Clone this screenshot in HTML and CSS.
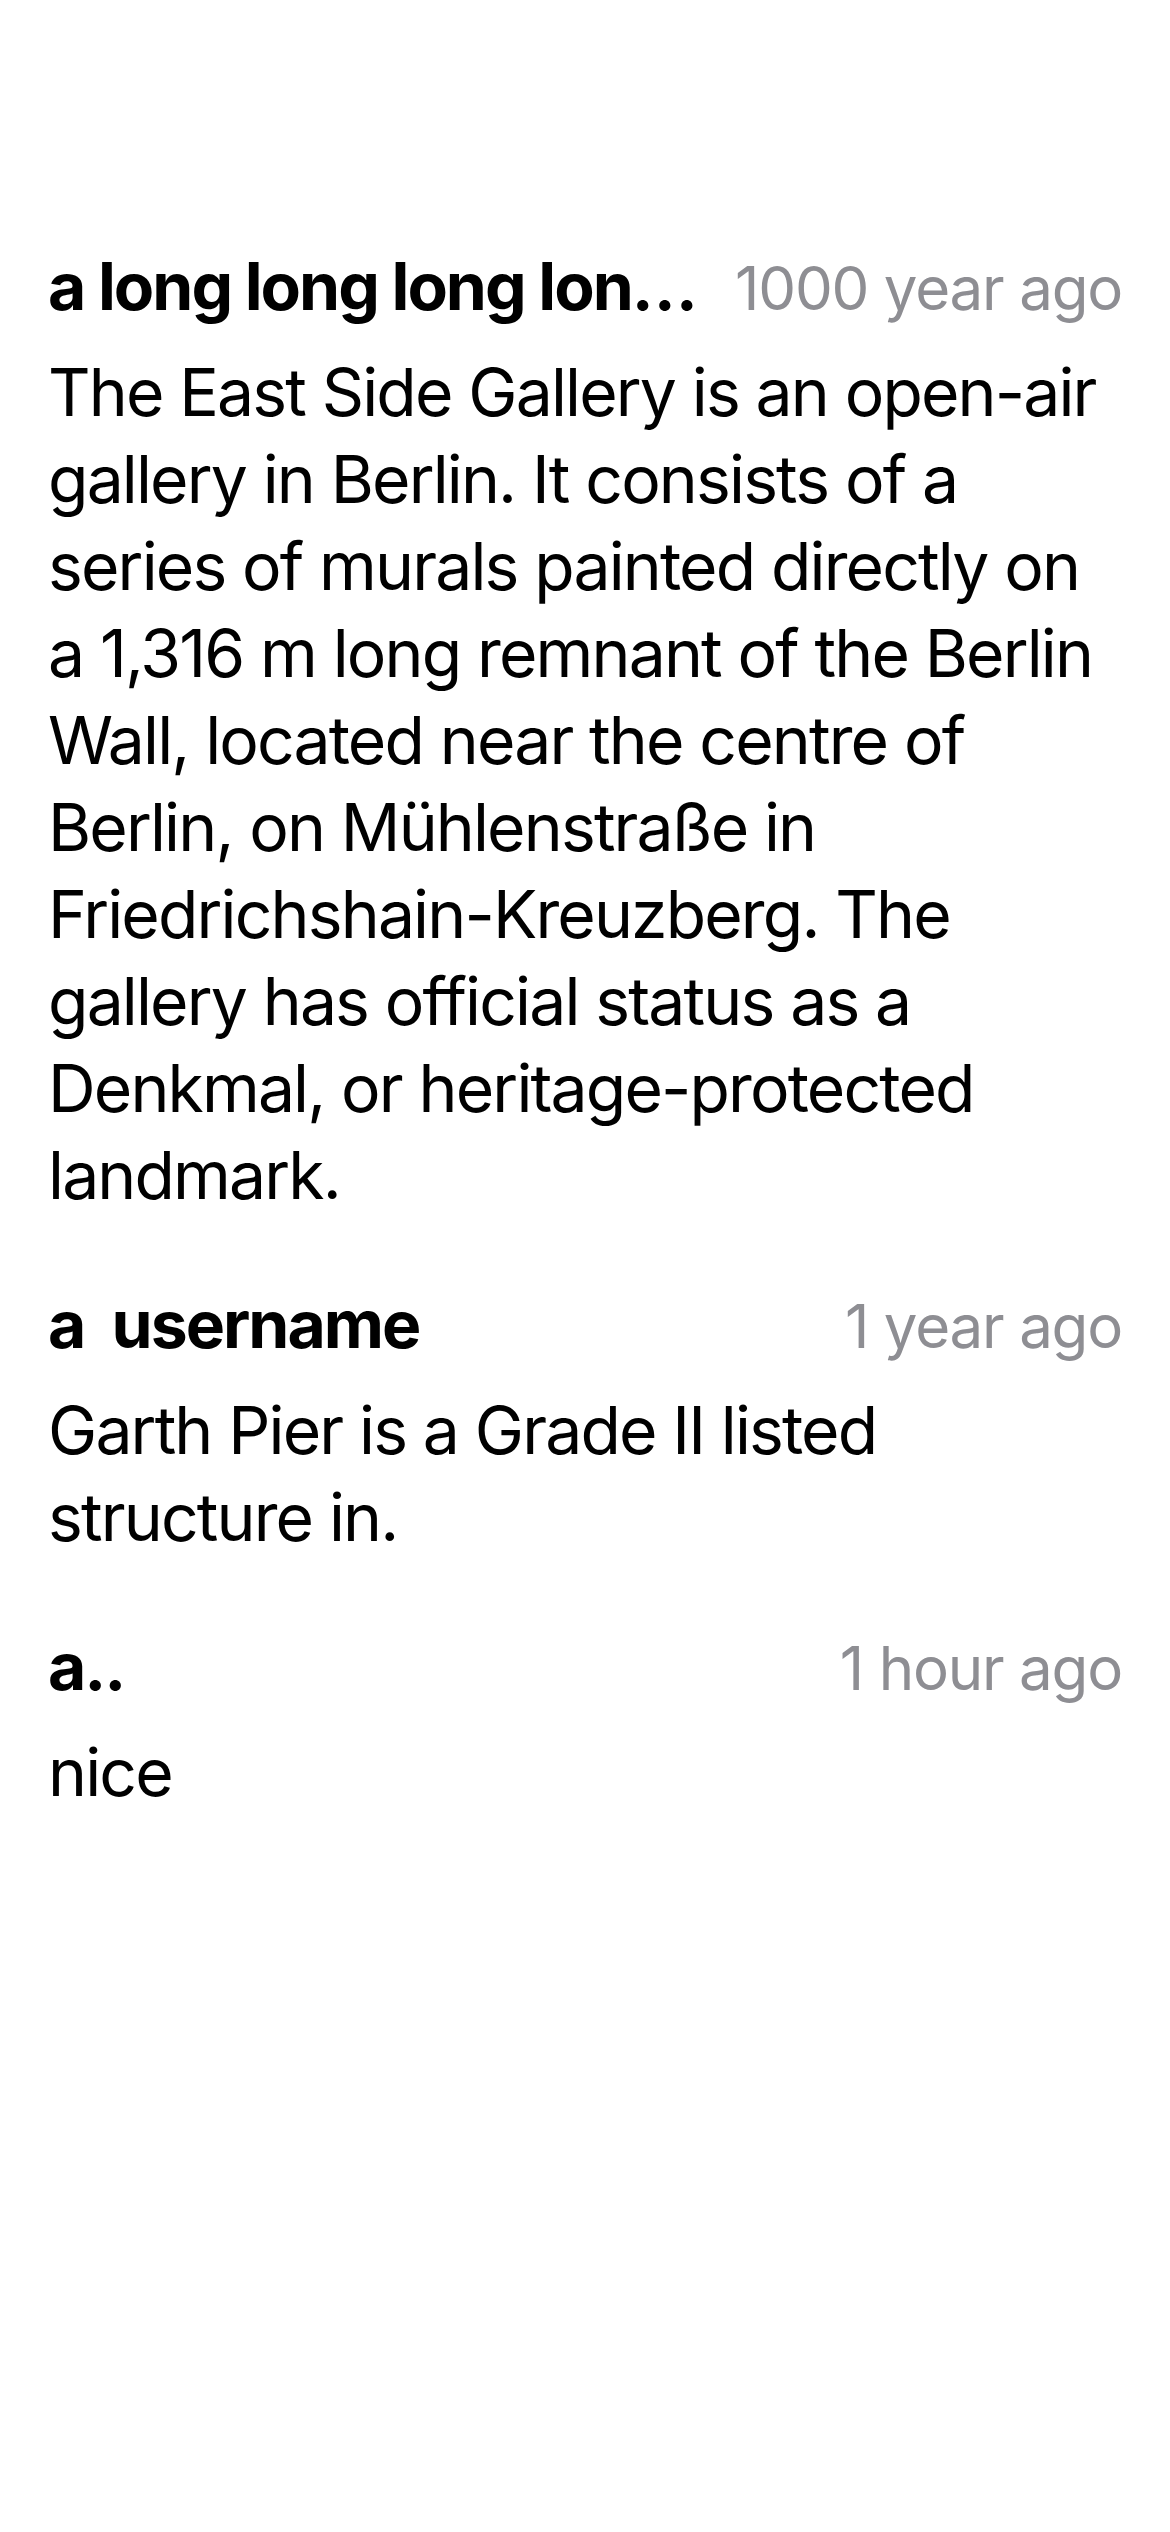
FILE: index.html
```html
<!DOCTYPE html>
<html lang="en">
<head>
<meta charset="utf-8">
<title>Comments</title>
<link rel="stylesheet" href="styles.css">
</head>
<body>
<main class="comments">
  <article class="comment">
    <header class="comment-head">
      <span class="author">a long long long lon…</span>
      <span class="time">1000 year ago</span>
    </header>
    <p class="text">The East Side Gallery is an open-air gallery in Berlin. It consists of a series of murals painted directly on a 1,316 m long remnant of the Berlin Wall, located near the centre of Berlin, on Mühlenstraße in Friedrichshain-Kreuzberg. The gallery has official status as a Denkmal, or heritage-protected landmark.</p>
  </article>
  <article class="comment">
    <header class="comment-head">
      <span class="author">a  username</span>
      <span class="time">1 year ago</span>
    </header>
    <p class="text">Garth Pier is a Grade II listed structure in.</p>
  </article>
  <article class="comment">
    <header class="comment-head">
      <span class="author">a..</span>
      <span class="time">1 hour ago</span>
    </header>
    <p class="text">nice</p>
  </article>
</main>
</body>
</html>
```

FILE: styles.css
```css
html, body {
  margin: 0;
  padding: 0;
  background: #ffffff;
}

body {
  font-family: Inter, "Noto Sans", "Liberation Sans", sans-serif;
  color: #000000;
  -webkit-font-smoothing: antialiased;
}

.comments {
  display: flex;
  flex-direction: column;
  gap: 65px;
  padding: 246px 48px 0 48px;
}

.comment {
  display: flex;
  flex-direction: column;
  gap: 23px;
}

.comment-head {
  display: flex;
  align-items: baseline;
  justify-content: space-between;
  gap: 24px;
  height: 80px;
}

.author {
  flex: 1 1 auto;
  min-width: 0;
  font-size: 66px;
  line-height: 80px;
  font-weight: 700;
  letter-spacing: -2px;
  white-space: pre;
  overflow: hidden;
  text-overflow: ellipsis;
}

.time {
  flex: 0 0 auto;
  font-size: 60px;
  line-height: 80px;
  font-weight: 400;
  color: #8e8e93;
  letter-spacing: -1.2px;
}

.text {
  margin: 0;
  font-size: 66px;
  line-height: 87px;
  font-weight: 400;
  letter-spacing: -1.85px;
}
```
